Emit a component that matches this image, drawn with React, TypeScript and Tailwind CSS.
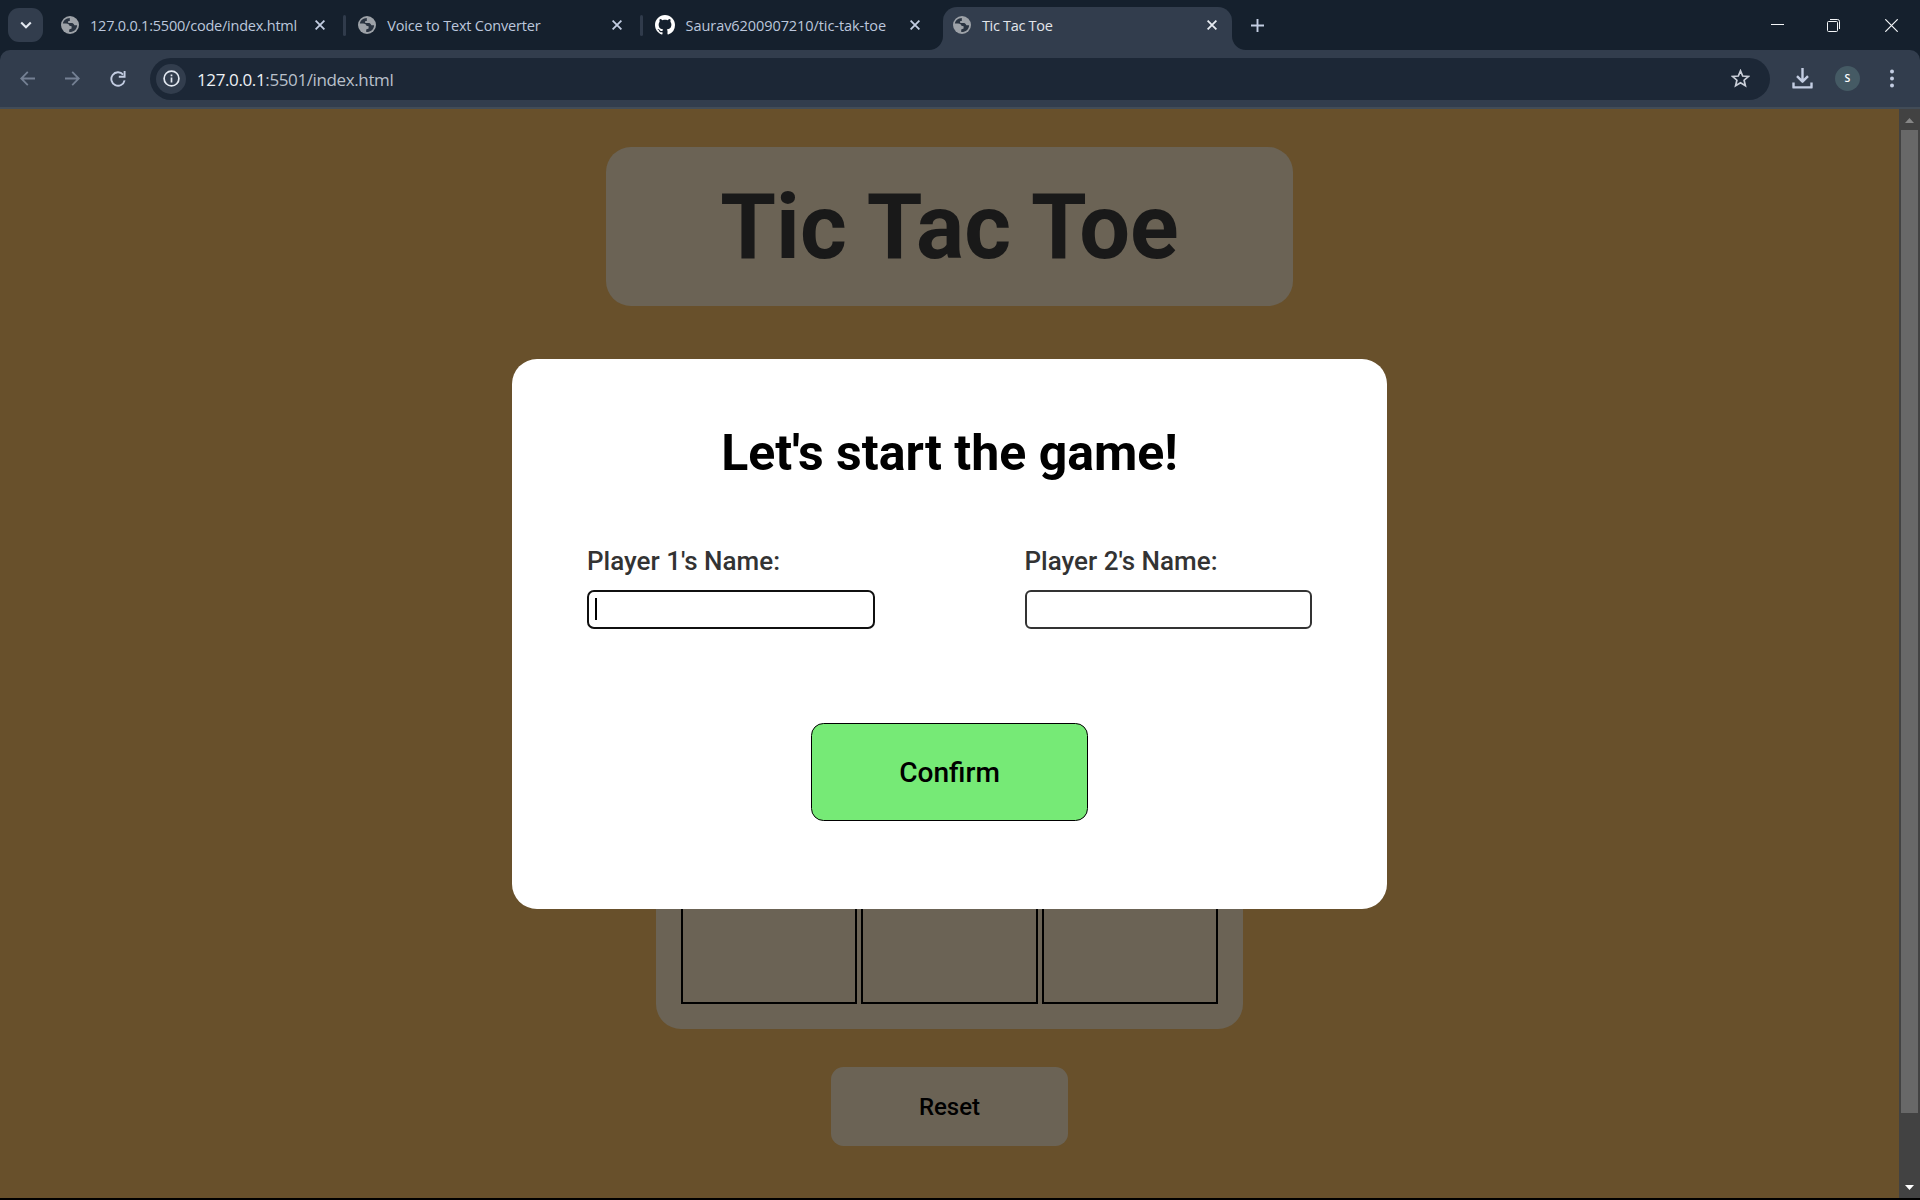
import type { ReactNode } from "react";

function GlobeIcon() {
  return (
    <svg className="size-[18px] shrink-0" viewBox="0 0 18 18">
      <circle cx="9" cy="9" r="9" fill="#9da2a8" />
      <path
        className="fill-[#2a3441]"
        d="M8.8 1.9C5 2 2.2 4.4 1.9 7.4L5.2 7.5C7.2 7.6 8.2 8.4 8.4 9.8L10.6 10.2V12.6L8.2 13.4V16.1C12.6 16.3 16 13.2 16.1 9.2H13.4C12.8 7.6 11.6 7 10.2 7H7.2V4.9H8.8Z"
      />
    </svg>
  );
}

function GithubIcon() {
  return (
    <svg className="-ml-px size-5 shrink-0" viewBox="0 0 16 16" fill="#ffffff">
      <path d="M8 0C3.58 0 0 3.58 0 8c0 3.54 2.29 6.53 5.47 7.59.4.07.55-.17.55-.38 0-.19-.01-.82-.01-1.49-2.01.37-2.53-.49-2.69-.94-.09-.23-.48-.94-.82-1.13-.28-.15-.68-.52-.01-.53.63-.01 1.08.58 1.23.82.72 1.21 1.87.87 2.33.66.07-.52.28-.87.51-1.07-1.78-.2-3.64-.89-3.64-3.95 0-.87.31-1.59.82-2.15-.08-.2-.36-1.02.08-2.12 0 0 .67-.21 2.2.82.64-.18 1.32-.27 2-.27s1.36.09 2 .27c1.53-1.04 2.2-.82 2.2-.82.44 1.1.16 1.92.08 2.12.51.56.82 1.27.82 2.15 0 3.07-1.87 3.75-3.65 3.95.29.25.54.73.54 1.48 0 1.07-.01 1.93-.01 2.2 0 .21.15.46.55.38A8.01 8.01 0 0 0 16 8c0-4.42-3.58-8-8-8z" />
    </svg>
  );
}

function CloseIcon({ active }: { active?: boolean }) {
  return (
    <svg className={active ? "size-[10px] shrink-0 text-[#e8ecf2]" : "size-[10px] shrink-0 text-[#c3cde2]"} viewBox="0 0 10 10" fill="none" stroke="currentColor" strokeWidth="1.8">
      <path d="M.6 .6L9.4 9.4M9.4 .6L.6 9.4" />
    </svg>
  );
}

function Tab({ icon, children, separator }: { icon: ReactNode; children: ReactNode; separator?: boolean }) {
  return (
    <div className="flex h-[50px] w-[297.3px] shrink-0 items-center pl-[10px] text-[#bcc7dc]">
      <div className="flex w-[264px] items-center gap-[11px]">
        {icon}
        <span className="relative top-px flex-1 whitespace-nowrap text-[14.5px] leading-5">{children}</span>
        <CloseIcon />
      </div>
      {separator && <div className="ml-[18px] h-[21px] w-[3px] rounded-full bg-[#303b4b]" />}
    </div>
  );
}

function TabStrip() {
  return (
    <div className="flex h-[50px] items-center bg-[#15202d]">
      <div className="ml-2 flex h-[34px] w-[35px] shrink-0 items-center justify-center rounded-[11px] bg-[#323d4d]">
        <svg className="size-3" viewBox="0 0 12 12" fill="none" stroke="#e3e8f0" strokeWidth="2.1">
          <path d="M1.2 3.4L6 8.2L10.8 3.4" />
        </svg>
      </div>
      <div className="ml-2 flex flex-1">
        <Tab icon={<GlobeIcon />} separator>
          <span className="tracking-[-0.22px]">127.0.0.1:5500/code/index.html</span>
        </Tab>
        <Tab icon={<GlobeIcon />} separator>
          <span className="tracking-[-0.19px]">Voice to Text Converter</span>
        </Tab>
        <Tab icon={<GithubIcon />}>
          <span className="tracking-[-0.07px]">Saurav6200907210/tic-tak-toe</span>
        </Tab>
        <div className="relative mt-[7px] flex h-[43px] w-[289.5px] shrink-0 items-center rounded-t-[14px] bg-[#323d4d] pr-[15px] pb-[7px] pl-[10px] text-[#e3e6eb]">
          <svg className="absolute bottom-0 -left-[14px] size-[14px]" viewBox="0 0 14 14" fill="#323d4d">
            <path d="M14 0V14H0A14 14 0 0 0 14 0Z" />
          </svg>
          <svg className="absolute -right-[14px] bottom-0 size-[14px]" viewBox="0 0 14 14" fill="#323d4d">
            <path d="M0 0V14H14A14 14 0 0 1 0 0Z" />
          </svg>
          <GlobeIcon />
          <span className="relative top-px ml-[11px] flex-1 text-[14.5px] leading-5 tracking-[-0.3px]">Tic Tac Toe</span>
          <CloseIcon active />
        </div>
        <div className="ml-[19px] flex h-[50px] items-center">
          <svg className="size-[13px]" viewBox="0 0 13 13" stroke="#c3cde2" strokeWidth="1.9">
            <path d="M6.5 0V13M0 6.5H13" />
          </svg>
        </div>
      </div>
      <div className="flex items-center pr-[22px] text-[#f4f6f8]">
        <svg className="size-[13px]" viewBox="0 0 13 13" fill="currentColor">
          <path d="M0 5H13V6H0Z" />
        </svg>
        <svg className="ml-[43px] size-[13px]" viewBox="0 0 13 13" fill="none" stroke="currentColor">
          <rect x=".5" y="2.5" width="10" height="10" rx="1" />
          <path d="M3 .5H10.5Q12.5 .5 12.5 2.5V10" />
        </svg>
        <svg className="ml-[45px] size-[13px]" viewBox="0 0 13 13" fill="none" stroke="currentColor" strokeWidth="1.2">
          <path d="M.3 .3L12.7 12.7M12.7 .3L.3 12.7" />
        </svg>
      </div>
    </div>
  );
}

function Toolbar() {
  return (
    <div className="bg-[#15202d]">
      <div className="flex h-[59px] items-center rounded-t-[10px] border-b-2 border-[#424c57] bg-[#323d4d] pl-5">
        <svg className="size-[15px]" viewBox="0 0 15 15" fill="none" stroke="#748093" strokeWidth="1.8">
          <path d="M15 7.5H1.2M7.8 .8L1.2 7.5L7.8 14.2" />
        </svg>
        <svg className="ml-[30px] size-[15px]" viewBox="0 0 15 15" fill="none" stroke="#748093" strokeWidth="1.8">
          <path d="M0 7.5H13.8M7.2 .8L13.8 7.5L7.2 14.2" />
        </svg>
        <svg className="ml-[30px] size-4" viewBox="0 0 16 16" fill="none" stroke="#c3cde2" strokeWidth="1.9">
          <path d="M14.6 9.4A6.7 6.7 0 1 1 13.1 3.6" />
          <path d="M14.6 0V5.8H8.8" />
        </svg>
        <div className="ml-6 flex h-[42px] w-[1620px] items-center rounded-full bg-[#1c2736] pr-[20px] pl-[6px]">
          <div className="flex size-[30px] items-center justify-center rounded-full bg-[#323d4d]">
            <svg className="size-[17px]" viewBox="0 0 17 17" fill="none" stroke="#e3e8f0" strokeWidth="1.7">
              <circle cx="8.5" cy="8.5" r="7.4" />
              <path d="M8.5 7.6V12.6M8.5 4.4V6.2" />
            </svg>
          </div>
          <span className="relative top-px ml-[11px] flex-1 text-[17px] leading-6 tracking-[-0.38px] text-[#b9c0cb]">
            <span className="text-[#eef1f5]">127.0.0.1</span>:5501/index.html
          </span>
          <svg className="size-[19px]" viewBox="0 0 19 19" fill="none" stroke="#c9ced8" strokeWidth="1.7">
            <path d="M9.5 1.8L11.7 7L17.4 7.5L13.1 11.2L14.4 16.8L9.5 13.8L4.6 16.8L5.9 11.2L1.6 7.5L7.3 7Z" />
          </svg>
        </div>
        <svg className="ml-[22px] size-[21px]" viewBox="0 0 21 21" fill="none" stroke="#c3cde2" strokeWidth="2.4" strokeLinejoin="round">
          <path d="M10.5 0V13.4M5 8.2L10.5 13.7L16 8.2M1.5 14.5V19.4H19.5V14.5" />
        </svg>
        <div className="ml-[22px] flex size-[25px] items-center justify-center rounded-full bg-[#455a64] text-[10.5px] font-semibold text-white">S</div>
        <svg className="ml-[30px] h-[19px] w-1" viewBox="0 0 4 19" fill="#c3cde2">
          <circle cx="2" cy="2.5" r="2" />
          <circle cx="2" cy="9.5" r="2" />
          <circle cx="2" cy="16.5" r="2" />
        </svg>
      </div>
    </div>
  );
}

function PlayerField({ label, focused }: { label: string; focused?: boolean }) {
  return (
    <div className="flex w-[287.5px] flex-col">
      <span className="text-[26px] leading-[30px] font-medium text-[#333333]">{label}</span>
      <div
        className={
          focused
            ? "mt-[14px] flex h-[39px] items-center rounded-[7px] border-2 border-[#101010] pl-[6px]"
            : "mt-[14px] flex h-[39px] items-center rounded-[6px] border-2 border-[#333333] pl-[6px]"
        }
      >
        {focused && <div className="mb-px h-[22px] w-[2px] bg-black" />}
      </div>
    </div>
  );
}

function StartModal() {
  return (
    <div className="absolute top-[250px] left-[512px] flex h-[550px] w-[875px] flex-col items-center rounded-[25px] bg-white px-[75px] pt-[64px]">
      <h2 className="text-[50px] leading-[60px] font-bold whitespace-nowrap text-black">Let's start the game!</h2>
      <div className="mt-[63px] flex w-full justify-between">
        <PlayerField label="Player 1's Name:" focused />
        <PlayerField label="Player 2's Name:" />
      </div>
      <button className="mt-[94px] h-[98px] w-[277px] rounded-[12.5px] border border-black bg-[#76ea76] pt-[2px] text-[28.1px] font-medium text-black">
        Confirm
      </button>
    </div>
  );
}

function Scrollbar() {
  return (
    <div className="flex w-[21px] shrink-0 flex-col items-center bg-[#424242]">
      <svg className="mt-[9px] h-[5px] w-[9px]" viewBox="0 0 9 5" fill="#868686">
        <path d="M4.5 0L9 5H0Z" />
      </svg>
      <div className="mt-[7px] h-[983px] w-[17px] bg-[#686868]" />
      <svg className="mt-[72px] h-[5px] w-[9px]" viewBox="0 0 9 5" fill="#ffffff">
        <path d="M0 0H9L4.5 5Z" />
      </svg>
    </div>
  );
}

export default function App() {
  return (
    <div className="flex h-[1200px] w-[1920px] flex-col overflow-hidden bg-black font-['Open_Sans',sans-serif]">
      <TabStrip />
      <Toolbar />
      <div className="flex h-[1089px] font-[Roboto,sans-serif]">
        <main className="relative flex flex-1 flex-col items-center bg-[#68502b] pt-[38px]">
          <div className="flex h-[159px] w-[687px] items-center justify-center rounded-[25px] bg-[#6b6355] pt-[3px]">
            <h1 className="text-[90px] leading-none font-bold text-[#191919]">Tic Tac Toe</h1>
          </div>
          <div className="mt-[136px] grid h-[587px] w-[587px] grid-cols-3 gap-1 rounded-[25px] bg-[#6b6355] p-[25px]">
            {Array.from({ length: 9 }, (_, i) => (
              <div key={i} className="border-2 border-black" />
            ))}
          </div>
          <button className="mt-[38px] h-[79px] w-[237px] rounded-[12.5px] bg-[#6b6355] text-[24px] font-medium text-black">
            Reset
          </button>
          <StartModal />
        </main>
        <Scrollbar />
      </div>
    </div>
  );
}
